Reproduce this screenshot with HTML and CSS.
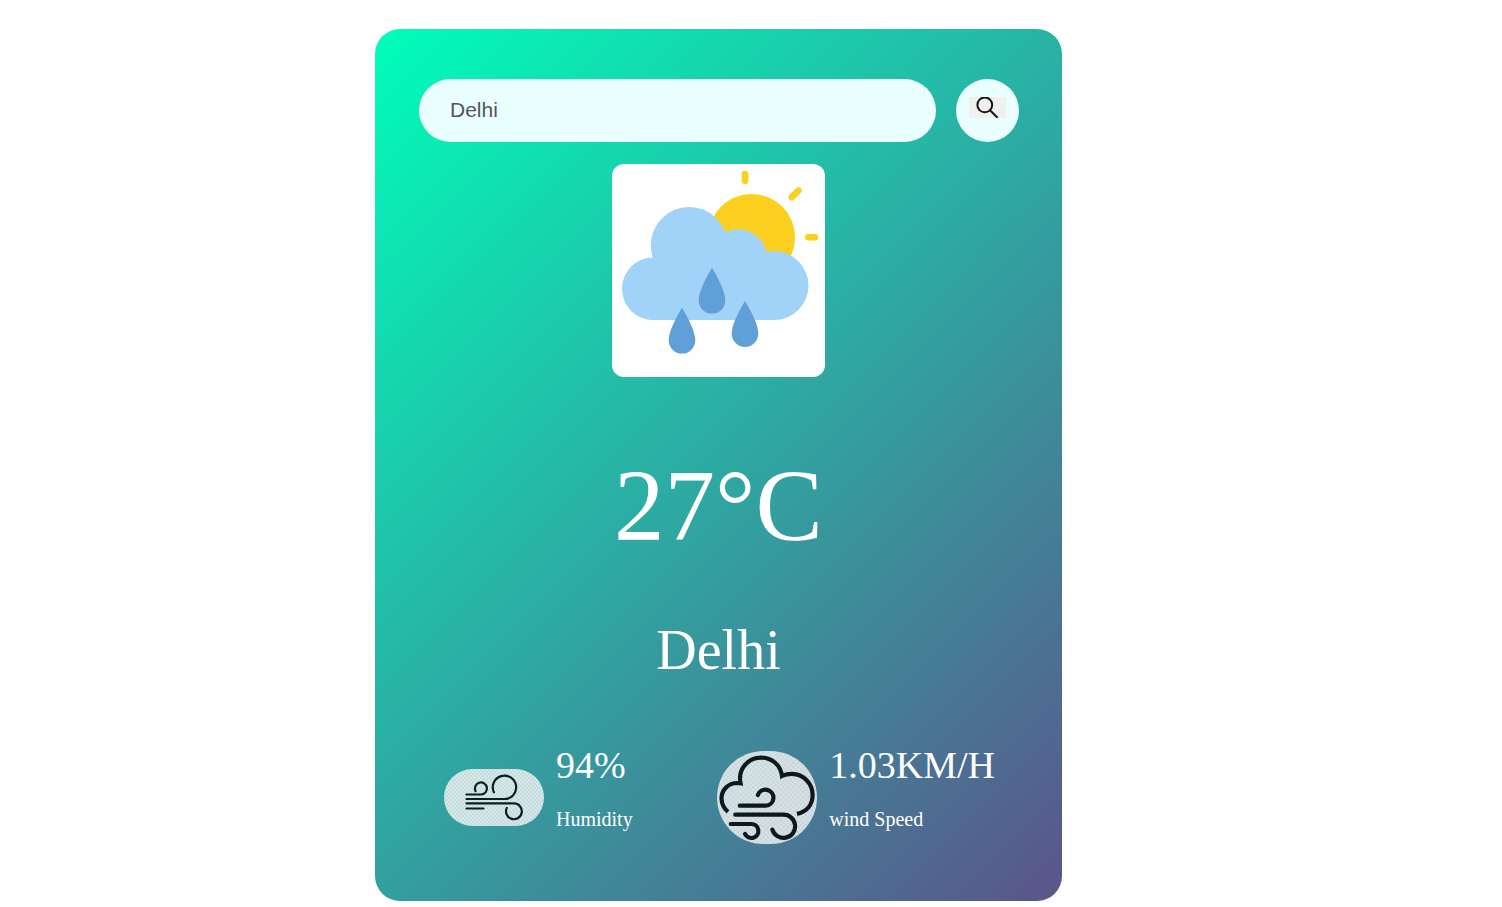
FILE: index.html
```html
<!DOCTYPE html>
<html lang="en">
<head>
<meta charset="utf-8">
<meta name="viewport" content="width=device-width, initial-scale=1">
<title>Weather App</title>
<link rel="stylesheet" href="styles.css">
</head>
<body>
<main class="card">
  <form class="search" onsubmit="return false">
    <input class="search-input" type="text" value="Delhi" aria-label="City name" spellcheck="false">
    <button class="search-button" type="submit" aria-label="Search">
      <svg class="search-icon" viewBox="0 0 37 21" aria-hidden="true">
        <rect width="37" height="21" fill="#f0f0f0"/>
        <g fill="none" stroke="#151515" stroke-width="2">
          <circle cx="15.8" cy="7.9" r="7.4"/>
          <path d="M21 13.200L28.600 20.800"/>
        </g>
      </svg>
    </button>
  </form>

  <section class="weather">
    <svg class="weather-icon" viewBox="0 0 213 213" role="img" aria-label="Rain with sun">
      <rect width="213" height="213" fill="#fefefe"/>
      <circle cx="139.7" cy="73.3" r="43.4" fill="#fbd01e"/>
      <path d="M133 10v6.800M186.400 26.600L179.800 33.200M196.300 73.300h6.800" stroke="#fbd01e" stroke-width="6.600" stroke-linecap="round"/>
      <g fill="#a1d2f7">
        <circle cx="77.2" cy="81.3" r="38.4"/>
        <circle cx="41.4" cy="124.8" r="31.4"/>
        <circle cx="126.3" cy="93.8" r="28.6"/>
        <circle cx="162" cy="121.6" r="34.5"/>
        <path d="M41.4 93.4H162V156.1H41.4z"/>
      </g>
      <g fill="#609fd7">
        <path d="M100 103.700c5 8.500 13.300 23 13.300 32.600a13.300 13.300 0 0 1-26.600 0c0-9.600 8.300-24.100 13.300-32.600z"/>
        <path d="M70 143.700c5 8.500 13.300 23 13.300 32.600a13.300 13.300 0 0 1-26.600 0c0-9.600 8.300-24.100 13.300-32.600z"/>
        <path d="M133 137c5 8.500 13.300 23 13.300 32.600a13.300 13.300 0 0 1-26.600 0c0-9.600 8.300-24.100 13.300-32.600z"/>
      </g>
    </svg>
    <h1 class="temp">27°C</h1>
    <h2 class="city">Delhi</h2>
  </section>

  <section class="details">
    <div class="detail">
      <svg class="detail-icon" viewBox="0 0 100 57" aria-hidden="true">
        <defs>
          <pattern id="check-small" width="4" height="4" patternUnits="userSpaceOnUse">
            <rect width="4" height="4" fill="#fcfcfc"/>
            <path d="M0 0h2v2H0zM2 2h2v2H2z" fill="#ececec"/>
          </pattern>
        </defs>
        <rect width="100" height="57" fill="url(#check-small)"/>
        <g fill="none" stroke="#000" stroke-width="2.200" stroke-linecap="round">
          <path d="M22.500 25.500H37A6 6 0 1 0 31.600 22.200"/>
          <path d="M22.500 30H60.500A11.700 11.700 0 1 0 49.900 23.300"/>
          <path d="M22.500 34.400H70A7.900 7.900 0 1 1 62.800 38.900"/>
          <path d="M22.500 39.500H39.500"/>
        </g>
      </svg>
      <div class="detail-text">
        <p class="value">94%</p>
        <p class="label">Humidity</p>
      </div>
    </div>
    <div class="detail">
      <svg class="detail-icon" viewBox="0 0 100 93" aria-hidden="true">
        <defs>
          <pattern id="check-large" width="5" height="5" patternUnits="userSpaceOnUse">
            <rect width="5" height="5" fill="#fcfcfc"/>
            <path d="M0 0h2.500v2.500H0zM2.500 2.500H5V5H2.500z" fill="#ededed"/>
          </pattern>
        </defs>
        <rect width="100" height="93" fill="url(#check-large)"/>
        <g fill="none" stroke="#000" stroke-width="4.200">
          <path d="M11 60.800A18 18 0 0 1 4.500 47.500A15.500 15.500 0 0 1 20 32L23.600 32.400C20.500 18 31 6.700 44.300 6.700C55 6.700 63.500 14 65 25C68 23.400 71 22.800 75 22.800A21 21 0 0 1 95.600 44C95.600 53.500 90 60.500 80 62.900"/>
          <g stroke-linecap="round">
            <path d="M22.700 54.700H48.700A8 8 0 1 0 40.900 44"/>
            <path d="M18.300 63.700H66.300A11.600 11.600 0 1 1 55.400 78.600"/>
            <path d="M13.700 73H34A7 7 0 1 1 28 82.900"/>
          </g>
        </g>
      </svg>
      <div class="detail-text">
        <p class="value">1.03KM/H</p>
        <p class="label">wind Speed</p>
      </div>
    </div>
  </section>
</main>
</body>
</html>
```
FILE: styles.css
```css
* {
  box-sizing: border-box;
  margin: 0;
  padding: 0;
}

body {
  padding: 29px 65px 0 0;
  background: #fff;
  font-family: "Liberation Serif", "Times New Roman", serif;
}

.card {
  width: 90%;
  max-width: 687px;
  margin: 0 auto;
  padding: 50px 43px 50px 44px;
  border-radius: 25px;
  background: linear-gradient(135deg, #00feba, #5b548a);
  color: #fff;
  text-align: center;
}

.search {
  display: flex;
  gap: 20px;
}

.search-input {
  flex: 1;
  min-width: 0;
  height: 63px;
  padding: 0 31px 2px;
  border: 0;
  outline: 0;
  border-radius: 32px;
  background: #eaffff;
  color: #555;
  font: 21px "Liberation Sans", Arial, sans-serif;
}

.search-button {
  display: flex;
  align-items: center;
  justify-content: center;
  width: 63px;
  height: 63px;
  padding-bottom: 6px;
  border: 0;
  border-radius: 50%;
  background: #eaffff;
  cursor: pointer;
}

.search-icon {
  width: 37px;
  height: 21px;
}

.weather {
  padding: 22px 1px 0 0;
}

.weather-icon {
  display: block;
  width: 213px;
  height: 213px;
  margin: 0 auto;
  border-radius: 12px;
}

.temp {
  margin-top: 71px;
  font-size: 101px;
  font-weight: 400;
  line-height: 116px;
}

.city {
  margin-top: 54px;
  font-size: 56px;
  font-weight: 400;
  line-height: 64px;
}

.details {
  display: flex;
  flex-wrap: wrap;
  align-items: center;
  justify-content: space-between;
  gap: 20px;
  margin-top: 61px;
  padding: 0 24px 0 25px;
  text-align: left;
}

.detail {
  display: flex;
  align-items: center;
  gap: 12px;
}

.detail-icon {
  width: 100px;
  border-radius: 50px;
  opacity: 0.8;
}

.detail-text {
  padding-bottom: 20px;
}

.value {
  font-size: 38px;
  line-height: 44px;
}

.label {
  margin-top: 20px;
  font-size: 20px;
  line-height: 24px;
}
```
